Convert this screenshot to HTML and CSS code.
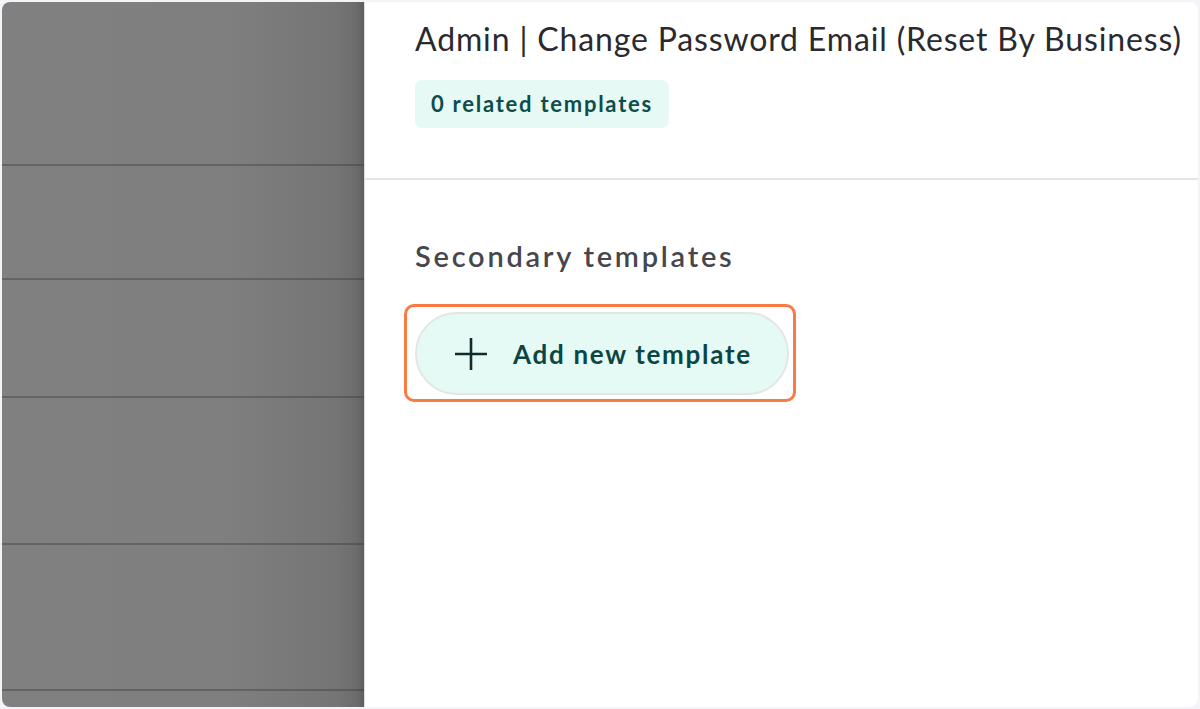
FILE: index.html
```html
<!DOCTYPE html>
<html>
<head>
<meta charset="utf-8">
<link rel="stylesheet" href="styles.css">
</head>
<body>
<div class="frame">
  <div class="overlay">
    <div class="orow r1"></div>
    <div class="orow r2"></div>
    <div class="orow r3"></div>
    <div class="orow r4"></div>
    <div class="orow r5"></div>
    <div class="orow r6"></div>
  </div>
  <div class="panel">
    <div class="panel-head">
      <h1 class="title">Admin | Change Password Email (Reset By Business)</h1>
      <span class="badge">0 related templates</span>
    </div>
    <div class="panel-body">
      <h2 class="section-title">Secondary templates</h2>
      <div class="highlight">
        <button class="add-btn">
          <svg class="plus" width="36" height="36" viewBox="0 0 36 36"><path d="M18 2V34M2 18H34" stroke="#0f2b2b" stroke-width="2.6" fill="none"/></svg>
          <span>Add new template</span>
        </button>
      </div>
    </div>
  </div>
</div>
</body>
</html>
```
FILE: styles.css
```css
html, body {
  margin: 0;
  padding: 0;
  background: #f3f3f8;
  height: 709px;
  overflow: hidden;
}
.frame {
  box-sizing: border-box;
  margin: 2px;
  height: 705px;
  border-radius: 8px;
  overflow: hidden;
  display: flex;
  background: #fff;
}
.overlay {
  width: 362px;
  flex: none;
  display: flex;
  flex-direction: column;
  background: linear-gradient(to right, #808080 0%, #7f7f7f 62%, #757575 92%, #6c6c6c 98%, #5e5e5e 100%);
}
.orow {
  border-bottom: 2px solid rgba(50,50,50,0.35);
  box-sizing: border-box;
  flex: none;
}
.r1 { height: 164px; }
.r2 { height: 114px; }
.r3 { height: 118px; }
.r4 { height: 147px; }
.r5 { height: 146px; }
.r6 { flex: 1; border-bottom: none; }
.panel {
  flex: 1;
  border-left: 1px solid #dedede;
  font-family: "Lato", "Noto Sans", sans-serif;
}
.panel-head {
  height: 178px;
  box-sizing: border-box;
  padding: 18px 0 0 50px;
  border-bottom: 2px solid #e4e4e6;
}
.title {
  margin: 0;
  font-size: 32px;
  font-weight: 400;
  color: #2a2a2e;
  line-height: 38px;
  letter-spacing: 0.85px;
  white-space: nowrap;
}
.badge {
  display: inline-block;
  margin-top: 22px;
  padding: 0 16px;
  height: 48px;
  line-height: 48px;
  background: #e7f9f5;
  border-radius: 7px;
  color: #0d4d4a;
  font-size: 22px;
  font-weight: 700;
  letter-spacing: 1.75px;
}
.panel-body {
  padding: 57px 0 0 39px;
}
.section-title {
  margin: 0 0 0 11px;
  font-size: 29px;
  font-weight: 600;
  color: #46464c;
  line-height: 38px;
  letter-spacing: 2.75px;
}
.highlight {
  display: inline-block;
  margin-top: 29px;
  padding: 5px 4px 4px 8px;
  border: 3px solid #f97a42;
  border-radius: 10px;
}
.add-btn {
  display: flex;
  align-items: center;
  gap: 24px;
  height: 83px;
  width: 374px;
  box-sizing: border-box;
  padding: 0 0 0 36px;
  background: #e6faf5;
  border: 2px solid #e2e6e5;
  border-radius: 42px;
  font-family: "Lato", "Noto Sans", sans-serif;
  font-size: 26px;
  font-weight: 700;
  color: #0c4644;
  letter-spacing: 1.7px;
  cursor: pointer;
}
.plus { flex: none; }
```
